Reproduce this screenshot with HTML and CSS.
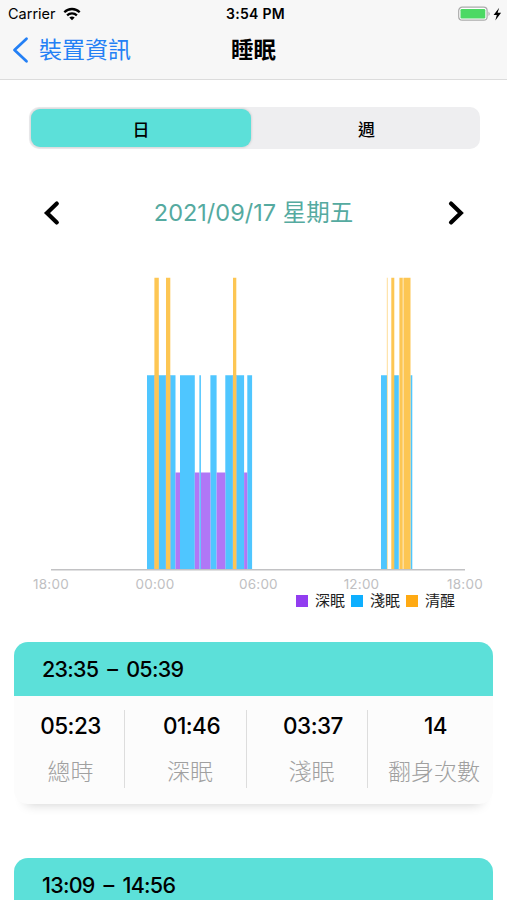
FILE: index.html
```html
<!DOCTYPE html>
<html lang="zh-Hant">
<head>
<meta charset="utf-8">
<title>睡眠</title>
<link rel="stylesheet" href="styles.css">
</head>
<body>
<header class="top">
  <div class="status">
    <div class="carrier">
      <span>Carrier</span>
      <svg class="wifi" width="18" height="14" viewBox="0 0 18 14" fill="none" stroke="#000" stroke-width="2.3"><path d="M1.3 5.2C5.6 .9 12.4 .9 16.7 5.2M4.1 8.3C6.9 5.6 11.1 5.6 13.9 8.3"/><path d="M6.3 10.5C7.9 9 10.1 9 11.7 10.5L9 13.2Z" fill="#000" stroke="none"/></svg>
    </div>
    <div class="clock">3:54 PM</div>
    <svg class="battery" width="45" height="16" viewBox="0 0 45 16"><rect x=".7" y="1.2" width="28.4" height="13" rx="3.5" fill="#fff" stroke="#aaa" stroke-width="1.2"/><rect x="2.5" y="3" width="24.8" height="9.4" rx="1.2" fill="#4cd964"/><path d="M30.5 5.5q2.5 2.3 0 4.6z" fill="#aaa"/><path d="M41.2 1.8 35.6 8.9h3.2l-1.5 5.6 5.8-7.7h-3.5z" fill="#000"/></svg>
  </div>
  <nav class="nav">
    <a class="back"><svg width="17" height="28" viewBox="0 0 17 28" fill="none" stroke="#2480f5" stroke-width="2.8" stroke-linecap="round" stroke-linejoin="round"><path d="M14.5 2.8 2.5 14l12 11.2"/></svg><span>裝置資訊</span></a>
    <h1 class="title">睡眠</h1>
  </nav>
</header>
<main>
  <div class="segments">
    <div class="segment selected">日</div>
    <div class="segment">週</div>
  </div>
  <div class="date-row">
    <svg width="18" height="26" viewBox="0 0 18 26" fill="none" stroke="#000" stroke-width="4.2" stroke-linecap="round"><path d="M14.8 3.6 5 13l9.8 9.4"/></svg>
    <div class="date">2021/09/17 星期五</div>
    <svg width="18" height="26" viewBox="0 0 18 26" fill="none" stroke="#000" stroke-width="4.2" stroke-linecap="round"><path d="M4 3.6 13.8 13 4 22.4"/></svg>
  </div>
  <svg class="chart" width="414" height="294" viewBox="51 277 414 294">
    <g fill="#4fc6ff">
      <path d="M147 375.3h28.5V570H147zM180 375.3h14.8V570H180zM199.4 375.3h1.5V570h-1.5zM210.4 375.3h6.2V570h-6.2zM225.3 375.3h18.8V570h-18.8zM247.3 375.3h4.8V570h-4.8z"/>
      <path d="M381 375.3h6V570h-6zM394 375.3h4.8V570H394zM410.5 375.3h1.8V570h-1.8z"/>
    </g>
    <path fill="#b077f6" d="M175.5 472.5h4.5V570h-4.5zM194.8 472.5h4.6V570h-4.6zM200.9 472.5h9.5V570h-9.5zM216.6 472.5h8.7V570h-8.7zM244.1 472.5h3.2V570h-3.2z"/>
    <path fill="#a3bce8" d="M154 375.3h5V570h-5zM165.6 375.3h5V570h-5zM232.6 375.3h4.2V570h-4.2z"/>
    <g fill="#fdc653">
      <path d="M154.4 277.7h4.4V570h-4.4zM166 277.7h4.3V570H166zM233 277.7h3.3V570H233z"/>
      <path d="M391.3 277.7h3V570h-3zM399.4 277.7h3.3V570h-3.3zM403.9 277.7h6.6V570h-6.6z"/>
      <path opacity=".6" d="M386.8 277.7h1V570h-1zM402.7 277.7h1.2V570h-1.2z"/>
    </g>
    <path d="M51 569.8h414" stroke="#c2c2c4" stroke-width="1.4"/>
  </svg>
  <div class="axis"><span>18:00</span><span>00:00</span><span>06:00</span><span>12:00</span><span>18:00</span></div>
  <div class="legend">
    <span class="key deep">深眠</span><span class="key light">淺眠</span><span class="key awake">清醒</span>
  </div>
  <section class="card">
    <h2 class="range">23:35 – 05:39</h2>
    <div class="stats">
      <div class="stat"><b>05:23</b><span>總時</span></div>
      <div class="stat"><b>01:46</b><span>深眠</span></div>
      <div class="stat"><b>03:37</b><span>淺眠</span></div>
      <div class="stat"><b>14</b><span>翻身次數</span></div>
    </div>
  </section>
  <section class="card">
    <h2 class="range">13:09 – 14:56</h2>
  </section>
</main>
</body>
</html>
```
FILE: styles.css
```css
* { box-sizing: border-box; }
body {
  margin: 0;
  height: 900px;
  overflow: hidden;
  background: #fff;
  color: #000;
  font-family: Inter, "Noto Sans CJK TC", sans-serif;
}
svg { display: block; flex: none; }
main { height: 820px; overflow: hidden; }
.top { height: 80px; background: #f7f7f7; border-bottom: 1px solid #dcdcdc; }
.status {
  display: grid;
  grid-template-columns: 1fr auto 1fr;
  align-items: center;
  height: 27px;
  padding: 0 4px 0 8px;
  font-size: 14.5px;
  line-height: 27px;
}
.carrier { display: flex; align-items: center; gap: 7px; }
.clock { font-weight: 600; font-size: 14px; letter-spacing: .3px; }
.battery { justify-self: end; }
.nav {
  display: grid;
  grid-template-columns: 1fr auto 1fr;
  align-items: center;
  height: 46px;
  padding: 0 12px;
}
.back { display: flex; align-items: center; gap: 10px; color: #2480f5; font-size: 23px; line-height: 46px; }
.title { margin: 0; font-size: 22.5px; line-height: 46px; font-weight: 700; }
.segments {
  display: grid;
  grid-template-columns: 220px 1fr;
  height: 42px;
  margin: 27px 27px 0 29px;
  padding: 2px;
  border-radius: 10px;
  background: #eeeef0;
}
.segment { display: flex; align-items: center; justify-content: center; padding-left: 4px; font-size: 17px; font-weight: 500; }
.selected { padding: 0; border-radius: 9px; background: #5ce0d9; box-shadow: 0 0 3px rgba(0, 0, 0, .2); }
.date-row { display: flex; align-items: center; justify-content: space-between; height: 46px; margin: 41px 42px 0; }
.date { color: #55aaa0; font-size: 23.5px; line-height: 48px; white-space: nowrap; }
.chart { margin: 41px 0 0 51px; }
.axis {
  display: flex;
  justify-content: space-between;
  margin: 5px 23px 0 32px;
  color: #c0c0c2;
  font-size: 13.5px;
  line-height: 16px;
}
.axis span { width: 38px; text-align: center; letter-spacing: .2px; white-space: nowrap; }
.legend { display: flex; justify-content: flex-end; gap: 6px; margin: 0 52px 0 0; line-height: 18px; font-size: 15px; color: #222; }
.key { display: flex; align-items: center; gap: 7px; }
.key::before { content: ""; width: 12px; height: 12px; }
.deep::before { background: #923df0; }
.light::before { background: #0eafff; }
.awake::before { background: #ffaa13; }
.card {
  height: 162px;
  margin: 32px 14px 54px;
  border-radius: 14px;
  background: #fcfcfc;
  box-shadow: 0 12px 12px -12px rgba(0, 0, 0, .2);
}
.range {
  height: 54px;
  margin: 0;
  padding-left: 28px;
  border-radius: 14px 14px 0 0;
  background: #5ce0d9;
  font-size: 21.5px;
  font-weight: 500;
  line-height: 55px;
  letter-spacing: -.75px;
  word-spacing: 4px;
  font-feature-settings: "calt" 0;
}
.stats { display: grid; grid-template-columns: 111px 122px 121px 1fr; height: 77px; margin-top: 14px; }
.stat { display: flex; flex-direction: column; align-items: center; padding-left: 9px; border-right: 1.5px solid #ddd; font-feature-settings: "calt" 0; }
.stat:first-child { padding-left: 3px; }
.stat:last-child { padding-left: 7px; border: 0; }
.stat b { padding-left: 3px; font-size: 22.5px; font-weight: 500; line-height: 32px; letter-spacing: -.5px; }
.stat:first-child b { padding: 0; }
.stat span { margin-top: 14px; color: #a0a0a0; font-size: 23px; font-weight: 300; line-height: 32px; white-space: nowrap; }
```
